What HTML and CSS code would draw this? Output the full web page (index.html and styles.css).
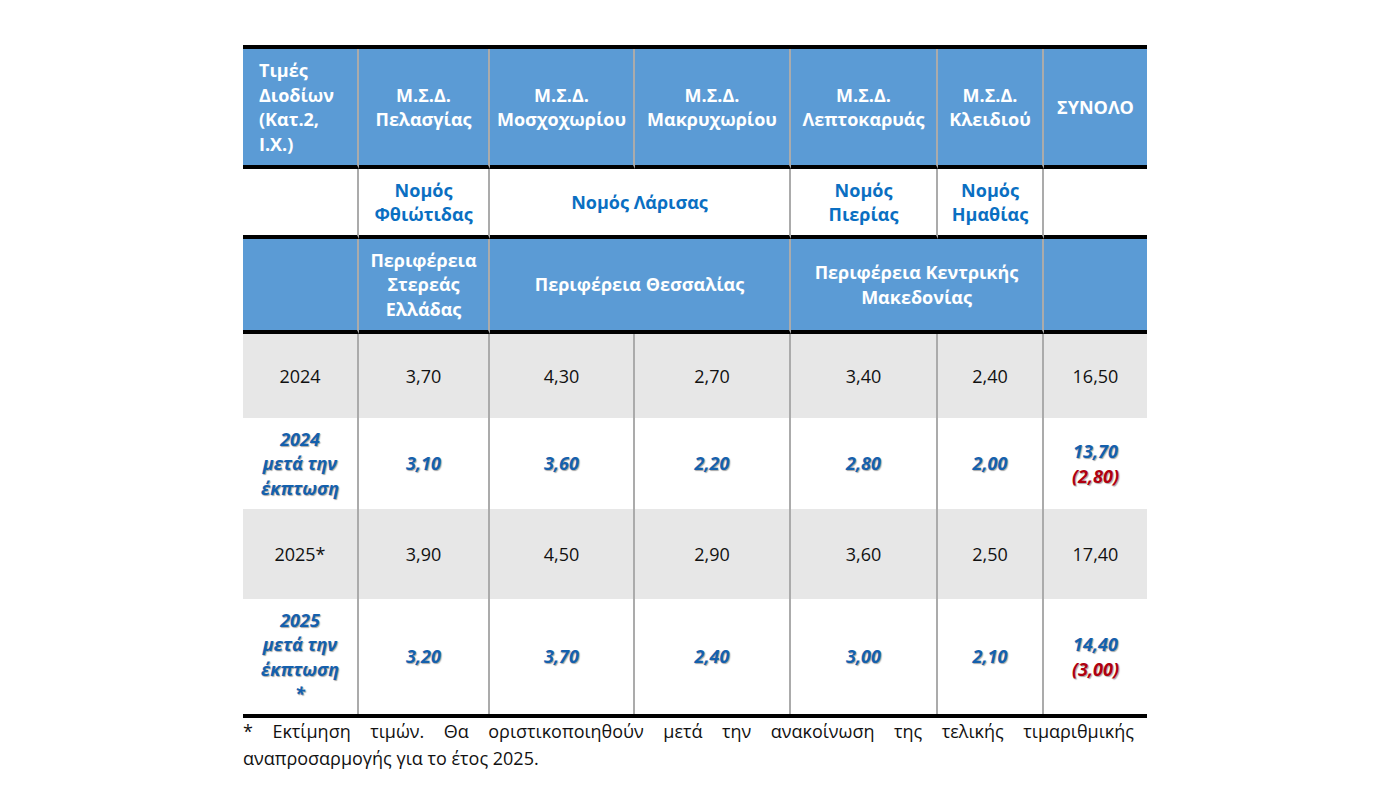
FILE: index.html
```html
<!DOCTYPE html>
<html lang="el">
<head>
<meta charset="utf-8">
<title>Τιμές Διοδίων</title>
<link rel="stylesheet" href="styles.css">
</head>
<body>
<div class="page">
  <table class="tolls">
    <colgroup>
      <col class="c1"><col class="c2"><col class="c3"><col class="c4"><col class="c5"><col class="c6"><col class="c7">
    </colgroup>
    <tr class="r-head">
      <td class="hd first">Τιμές<br>Διοδίων<br>(Κατ.2,<br>Ι.Χ.)</td>
      <td class="hd">Μ.Σ.Δ.<br>Πελασγίας</td>
      <td class="hd">Μ.Σ.Δ.<br>Μοσχοχωρίου</td>
      <td class="hd">Μ.Σ.Δ.<br>Μακρυχωρίου</td>
      <td class="hd">Μ.Σ.Δ.<br>Λεπτοκαρυάς</td>
      <td class="hd">Μ.Σ.Δ.<br>Κλειδιού</td>
      <td class="hd last">ΣΥΝΟΛΟ</td>
    </tr>
    <tr class="r-nomos">
      <td class="nm"></td>
      <td class="nm">Νομός<br>Φθιώτιδας</td>
      <td class="nm" colspan="2">Νομός Λάρισας</td>
      <td class="nm">Νομός<br>Πιερίας</td>
      <td class="nm">Νομός<br>Ημαθίας</td>
      <td class="nm last"></td>
    </tr>
    <tr class="r-region">
      <td class="hd"></td>
      <td class="hd">Περιφέρεια<br>Στερεάς<br>Ελλάδας</td>
      <td class="hd" colspan="2">Περιφέρεια Θεσσαλίας</td>
      <td class="hd" colspan="2">Περιφέρεια Κεντρικής<br>Μακεδονίας</td>
      <td class="hd last"></td>
    </tr>
    <tr class="r-year">
      <td>2024</td>
      <td>3,70</td>
      <td>4,30</td>
      <td>2,70</td>
      <td>3,40</td>
      <td>2,40</td>
      <td class="last">16,50</td>
    </tr>
    <tr class="r-disc">
      <td>2024<br>μετά την<br>έκπτωση</td>
      <td>3,10</td>
      <td>3,60</td>
      <td>2,20</td>
      <td>2,80</td>
      <td>2,00</td>
      <td class="last">13,70<br><span class="saving">(2,80)</span></td>
    </tr>
    <tr class="r-year r-year2">
      <td>2025*</td>
      <td>3,90</td>
      <td>4,50</td>
      <td>2,90</td>
      <td>3,60</td>
      <td>2,50</td>
      <td class="last">17,40</td>
    </tr>
    <tr class="r-disc r-end">
      <td>2025<br>μετά την<br>έκπτωση<br>*</td>
      <td>3,20</td>
      <td>3,70</td>
      <td>2,40</td>
      <td>3,00</td>
      <td>2,10</td>
      <td class="last">14,40<br><span class="saving">(3,00)</span></td>
    </tr>
  </table>
  <p class="note">* Εκτίμηση τιμών. Θα οριστικοποιηθούν μετά την ανακοίνωση της τελικής τιμαριθμικής αναπροσαρμογής για το έτος 2025.</p>
</div>
</body>
</html>
```

FILE: styles.css
```css
html, body {
  margin: 0;
  padding: 0;
  background: #ffffff;
}

body {
  font-family: "Open Sans", "Noto Sans", "DejaVu Sans", sans-serif;
  font-size: 18px;
  color: #111111;
}

.page {
  padding: 45px 0 0 243px;
}

.tolls {
  width: 904px;
  table-layout: fixed;
  border-collapse: separate;
  border-spacing: 0;
  border-top: 4px solid #000000;
  border-bottom: 4px solid #000000;
}

.c1 { width: 116px; }
.c2 { width: 131px; }
.c3 { width: 145px; }
.c4 { width: 156px; }
.c5 { width: 147px; }
.c6 { width: 106px; }
.c7 { width: 103px; }

.tolls td {
  padding: 0;
  text-align: center;
  vertical-align: middle;
  line-height: 24.5px;
  border-right: 2px solid #ababab;
}

.tolls td.last {
  border-right: none;
}

.r-head { height: 120px; }
.r-nomos { height: 70px; }
.r-region { height: 95px; }
.r-year { height: 84px; }
.r-disc { height: 91px; }
.r-year2 { height: 90px; }
.r-end { height: 115px; }

.r-head td,
.r-nomos td,
.r-region td {
  border-bottom: 4px solid #000000;
}

.hd {
  background: #5b9bd5;
  color: #ffffff;
  font-weight: 700;
}

.hd.first {
  text-align: left;
  padding-left: 16px;
}

.nm {
  background: #ffffff;
  color: #0a6fc2;
  font-weight: 700;
}

.r-year td {
  background: #e7e7e7;
  color: #111111;
}

.r-disc td {
  background: #ffffff;
  color: #1460ad;
  font-weight: 700;
  font-style: italic;
  text-shadow: 1px 1px 1px rgba(0, 0, 0, 0.35);
}

.r-disc .saving {
  color: #b00010;
}

.note {
  width: 891px;
  margin: 0;
  line-height: 27px;
  text-align: justify;
  color: #111111;
}
```
